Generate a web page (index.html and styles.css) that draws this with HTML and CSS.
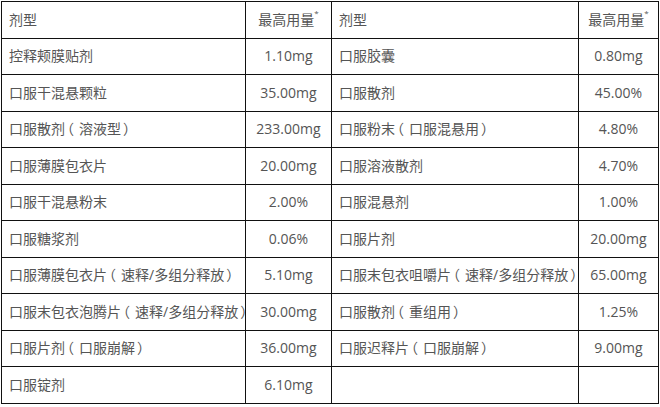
FILE: index.html
```html
<!DOCTYPE html>
<html lang="zh">
<head>
<meta charset="utf-8">
<link rel="stylesheet" href="styles.css">
</head>
<body>
<table class="dose">
  <colgroup>
    <col class="c-name"><col class="c-val"><col class="c-name2"><col class="c-val2">
  </colgroup>
  <tr><td>剂型</td><td class="num">最高用量<sup>*</sup></td><td>剂型</td><td class="num">最高用量<sup>*</sup></td></tr>
  <tr><td>控释颊膜贴剂</td><td class="num">1.10mg</td><td>口服胶囊</td><td class="num">0.80mg</td></tr>
  <tr><td>口服干混悬颗粒</td><td class="num">35.00mg</td><td>口服散剂</td><td class="num">45.00%</td></tr>
  <tr><td>口服散剂<span class="p">（</span>溶液型<span class="p">）</span></td><td class="num">233.00mg</td><td>口服粉末<span class="p">（</span>口服混悬用<span class="p">）</span></td><td class="num">4.80%</td></tr>
  <tr><td>口服薄膜包衣片</td><td class="num">20.00mg</td><td>口服溶液散剂</td><td class="num">4.70%</td></tr>
  <tr><td>口服干混悬粉末</td><td class="num">2.00%</td><td>口服混悬剂</td><td class="num">1.00%</td></tr>
  <tr><td>口服糖浆剂</td><td class="num">0.06%</td><td>口服片剂</td><td class="num">20.00mg</td></tr>
  <tr><td>口服薄膜包衣片<span class="p">（</span>速释/多组分释放<span class="p">）</span></td><td class="num">5.10mg</td><td>口服末包衣咀嚼片<span class="p">（</span>速释/多组分释放<span class="p">）</span></td><td class="num">65.00mg</td></tr>
  <tr><td>口服末包衣泡腾片<span class="p">（</span>速释/多组分释放<span class="p">）</span></td><td class="num">30.00mg</td><td>口服散剂<span class="p">（</span>重组用<span class="p">）</span></td><td class="num">1.25%</td></tr>
  <tr><td>口服片剂<span class="p">（</span>口服崩解<span class="p">）</span></td><td class="num">36.00mg</td><td>口服迟释片<span class="p">（</span>口服崩解<span class="p">）</span></td><td class="num">9.00mg</td></tr>
  <tr><td>口服锭剂</td><td class="num">6.10mg</td><td></td><td class="num"></td></tr>
</table>
</body>
</html>
```
FILE: styles.css
```css
html, body {
  margin: 0;
  padding: 0;
  background: #fff;
}
body {
  padding: 1px 0 0 1px;
  font-family: "Open Sans", "Noto Sans CJK SC", sans-serif;
  font-size: 14px;
  color: #555;
}
.dose {
  border-collapse: collapse;
  table-layout: fixed;
  width: 658px;
}
.c-name { width: 244px; }
.c-val { width: 86px; }
.c-name2 { width: 247px; }
.c-val2 { width: 80px; }
.dose tr {
  height: 36.5px;
}
.dose td {
  border: 1px solid #111;
  padding: 0 0 0 7px;
  white-space: nowrap;
  overflow: visible;
  vertical-align: middle;
  line-height: 18px;
}
.dose td.num {
  text-align: center;
  padding: 0;
}
.dose sup {
  font-size: 8px;
  vertical-align: top;
  line-height: 8px;
  position: relative;
  top: -2px;
}
.p {
  font-feature-settings: "halt" 1;
  padding: 0 5px 0 2px;
}
```
